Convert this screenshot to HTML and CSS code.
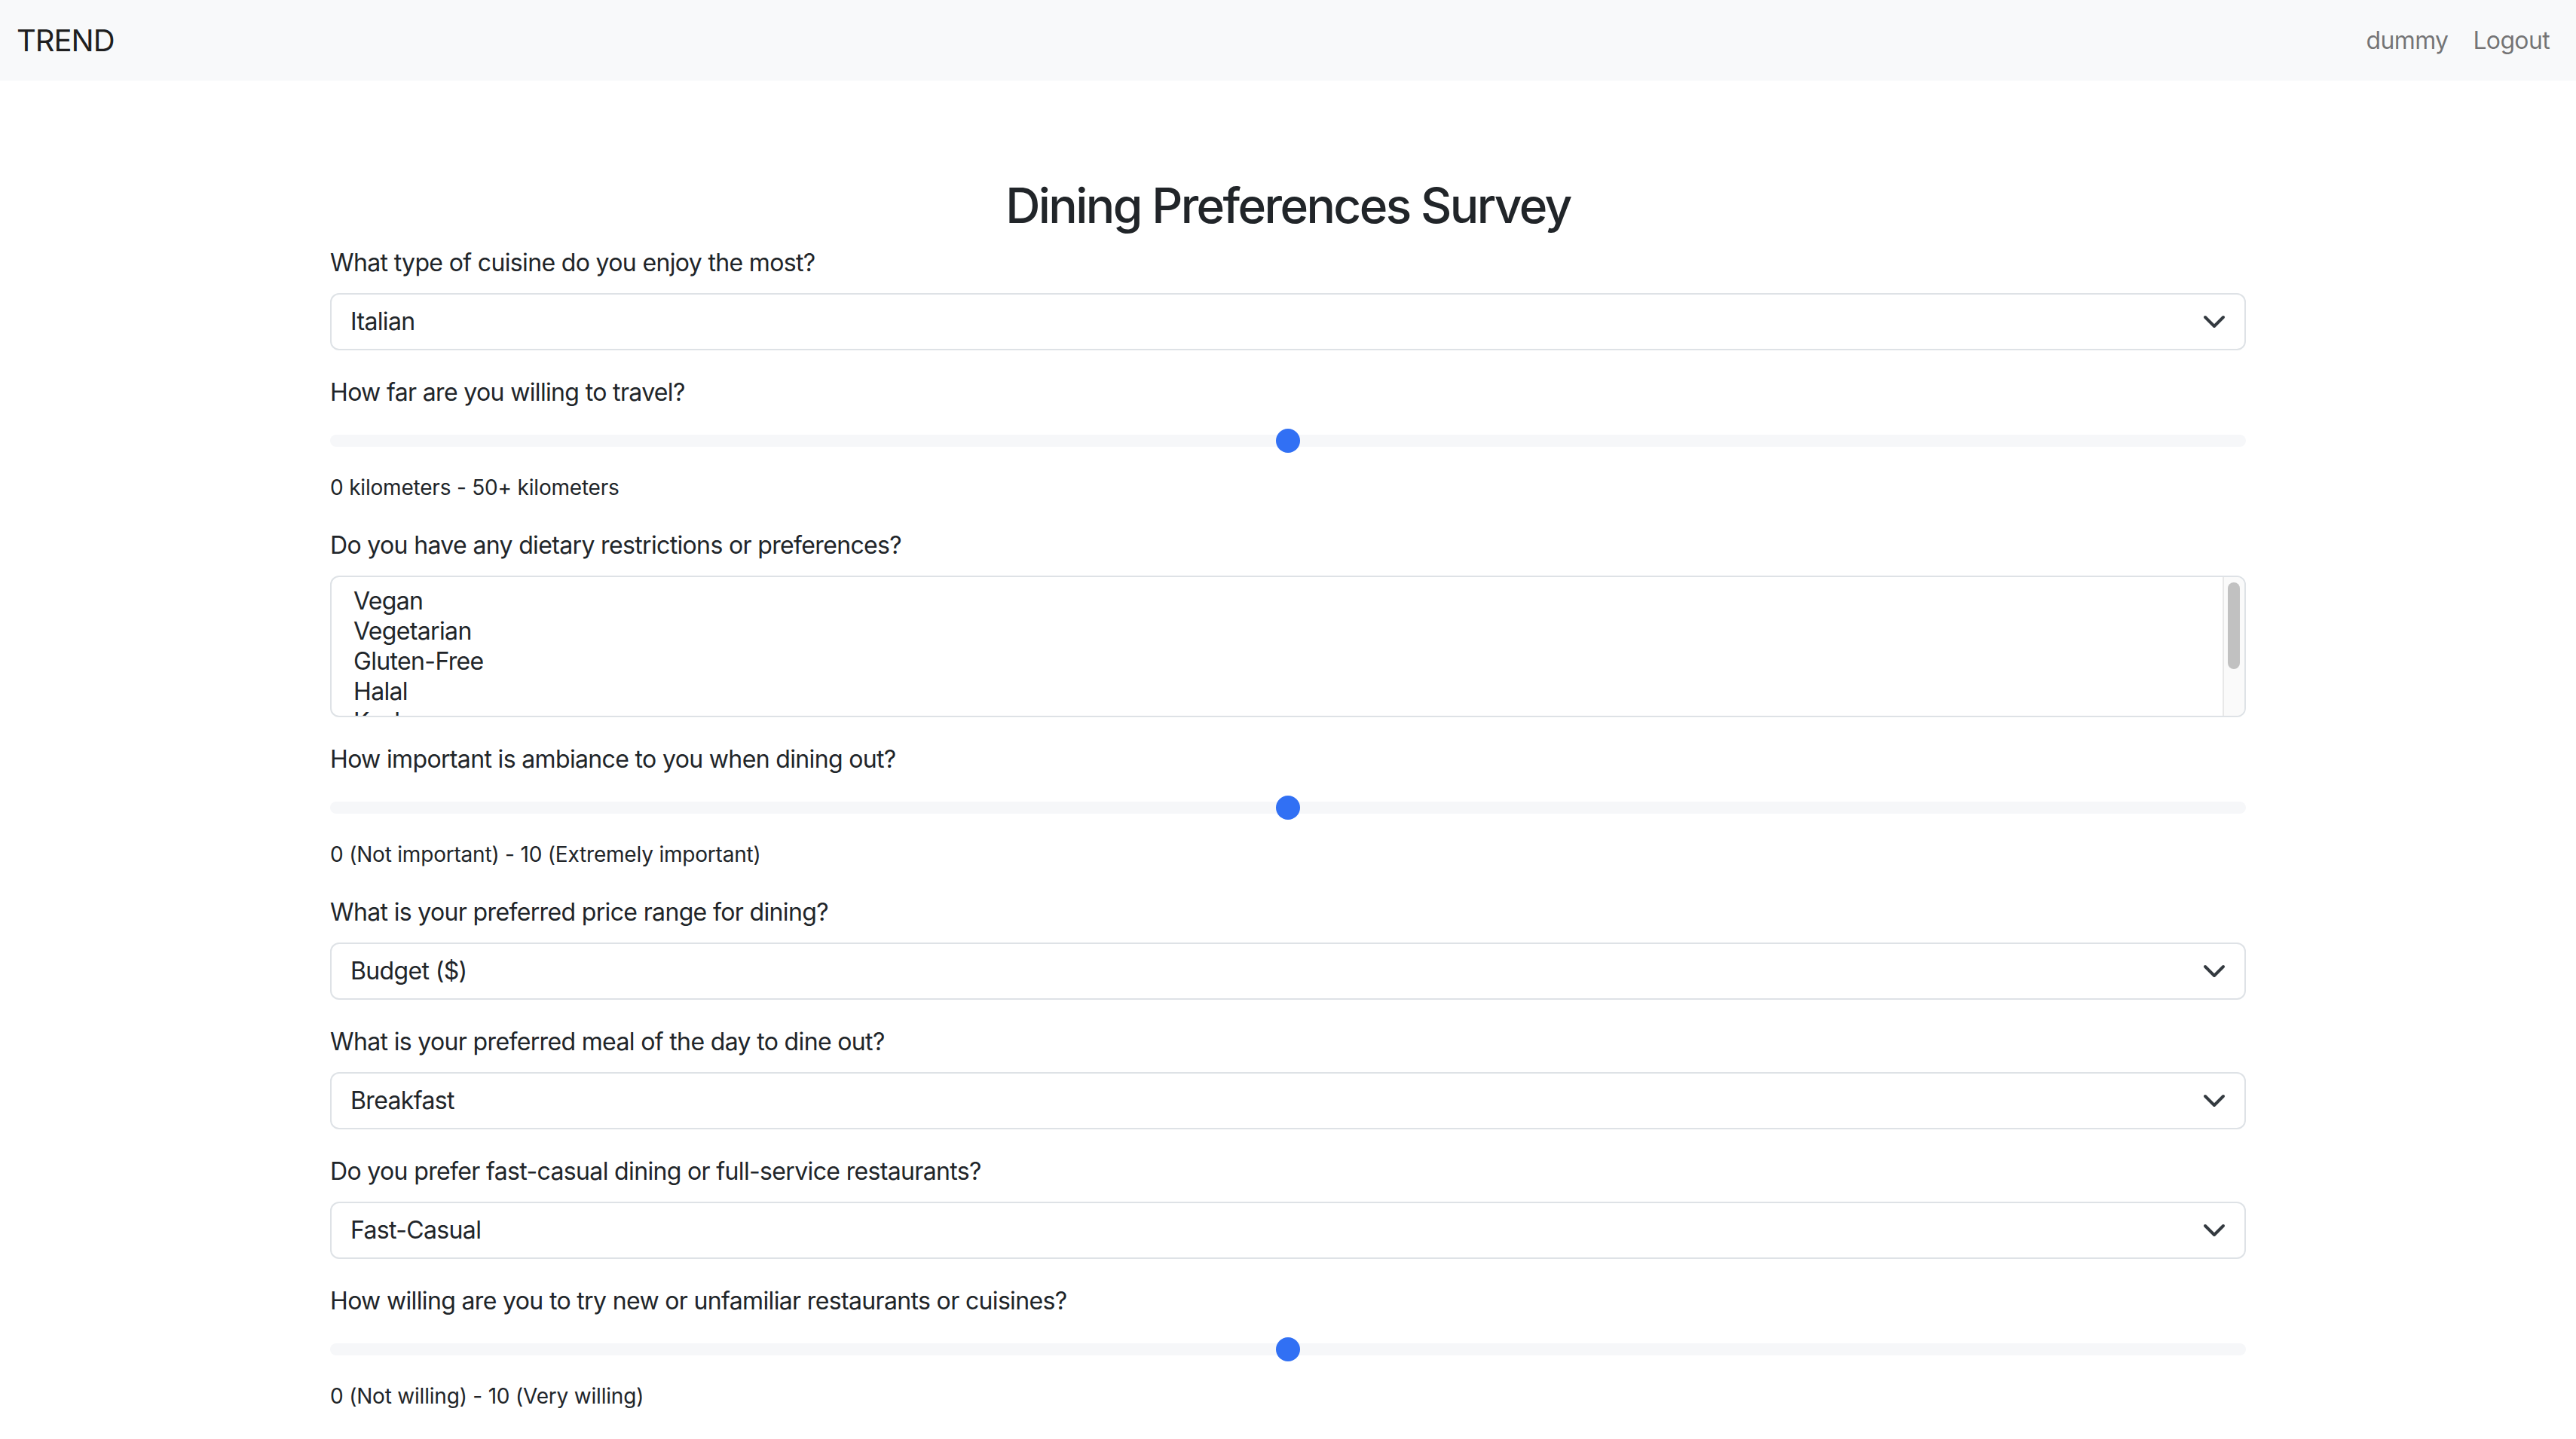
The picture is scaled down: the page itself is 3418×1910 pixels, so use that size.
FILE: index.html
```html
<!DOCTYPE html>
<html lang="en">
<head>
<meta charset="utf-8">
<title>Dining Preferences Survey</title>
<link rel="stylesheet" href="styles.css">
</head>
<body>
<nav class="navbar">
  <a class="brand">TREND</a>
  <div class="nav-links">
    <a class="nav-link">dummy</a>
    <a class="nav-link">Logout</a>
  </div>
</nav>
<main class="container">
  <h2 class="title">Dining Preferences Survey</h2>

  <div class="group">
    <div class="label">What type of cuisine do you enjoy the most?</div>
    <div class="select"><span>Italian</span><svg class="chev" viewBox="0 0 16 16"><path d="m2 5 6 6 6-6" fill="none" stroke="#343a40" stroke-width="2" stroke-linecap="round" stroke-linejoin="round"/></svg></div>
  </div>

  <div class="group">
    <div class="label">How far are you willing to travel?</div>
    <div class="range"><div class="track"></div><div class="thumb" style="left:50%"></div></div>
    <div class="help">0 kilometers - 50+ kilometers</div>
  </div>

  <div class="group">
    <div class="label">Do you have any dietary restrictions or preferences?</div>
    <div class="listbox">
      <div class="options">
        <div class="option">Vegan</div>
        <div class="option">Vegetarian</div>
        <div class="option">Gluten-Free</div>
        <div class="option">Halal</div>
        <div class="option">Kosher</div>
        <div class="option">None</div>
      </div>
      <div class="scrollbar"><div class="sb-thumb"></div></div>
    </div>
  </div>

  <div class="group">
    <div class="label">How important is ambiance to you when dining out?</div>
    <div class="range"><div class="track"></div><div class="thumb" style="left:50%"></div></div>
    <div class="help">0 (Not important) - 10 (Extremely important)</div>
  </div>

  <div class="group">
    <div class="label">What is your preferred price range for dining?</div>
    <div class="select"><span>Budget ($)</span><svg class="chev" viewBox="0 0 16 16"><path d="m2 5 6 6 6-6" fill="none" stroke="#343a40" stroke-width="2" stroke-linecap="round" stroke-linejoin="round"/></svg></div>
  </div>

  <div class="group">
    <div class="label">What is your preferred meal of the day to dine out?</div>
    <div class="select"><span>Breakfast</span><svg class="chev" viewBox="0 0 16 16"><path d="m2 5 6 6 6-6" fill="none" stroke="#343a40" stroke-width="2" stroke-linecap="round" stroke-linejoin="round"/></svg></div>
  </div>

  <div class="group">
    <div class="label">Do you prefer fast-casual dining or full-service restaurants?</div>
    <div class="select"><span>Fast-Casual</span><svg class="chev" viewBox="0 0 16 16"><path d="m2 5 6 6 6-6" fill="none" stroke="#343a40" stroke-width="2" stroke-linecap="round" stroke-linejoin="round"/></svg></div>
  </div>

  <div class="group">
    <div class="label">How willing are you to try new or unfamiliar restaurants or cuisines?</div>
    <div class="range"><div class="track"></div><div class="thumb" style="left:50%"></div></div>
    <div class="help">0 (Not willing) - 10 (Very willing)</div>
  </div>
</main>
</body>
</html>
```

FILE: styles.css
```css
* { box-sizing: border-box; }
html, body { margin: 0; padding: 0; }
body {
  font-family: Inter, "Noto Sans", "Liberation Sans", sans-serif;
  font-size: 32px;
  line-height: 1.5;
  letter-spacing: -0.65px;
  color: #212529;
  background: #fff;
}
.navbar {
  height: 107px;
  background: #f8f9fa;
  display: flex;
  align-items: center;
  justify-content: space-between;
  padding: 0 35px 0 22px;
}
.brand {
  font-size: 40px;
  color: rgba(0,0,0,0.9);
  letter-spacing: -1px;
}
.nav-links { display: flex; gap: 33px; }
.nav-link { color: rgba(0,0,0,0.55); font-size: 32px; }

.container {
  width: 2542px;
  margin: 0 auto;
}
.title {
  font-size: 64px;
  font-weight: 500;
  line-height: 77px;
  text-align: center;
  margin: 127px 0 14px;
  letter-spacing: -2.6px;
}
.group { margin-bottom: 32px; }
.label { margin-bottom: 16px; line-height: 48px; }

.select {
  height: 76px;
  border: 2px solid #dee2e6;
  border-radius: 12px;
  display: flex;
  align-items: center;
  justify-content: space-between;
  padding: 0 24px 0 25px;
  background: #fff;
}
.chev { width: 32px; height: 32px; display: block; }

.range {
  position: relative;
  height: 48px;
  display: flex;
  align-items: center;
}
.track {
  width: 100%;
  height: 16px;
  border-radius: 8px;
  background: #f6f7f9;
}
.thumb {
  position: absolute;
  top: 8px;
  width: 32px;
  height: 32px;
  margin-left: -16px;
  border-radius: 50%;
  background: #3170f4;
}
.help {
  margin-top: 17px;
  font-size: 28px;
  line-height: 42px;
  letter-spacing: -0.2px;
}

.listbox {
  height: 188px;
  border: 2px solid #dee2e6;
  border-radius: 12px;
  display: flex;
  overflow: hidden;
  background: #fff;
}
.options {
  flex: 1;
  padding: 12px 24px;
  overflow: hidden;
}
.option {
  height: 40px;
  line-height: 40px;
  padding: 0 5px;
}
.scrollbar {
  width: 29px;
  background: #fafafa;
  border-left: 2px solid #e8e8e8;
  padding: 7px 5px 0 5px;
}
.sb-thumb {
  width: 16px;
  height: 115px;
  border-radius: 8px;
  background: #c1c1c1;
}
```
